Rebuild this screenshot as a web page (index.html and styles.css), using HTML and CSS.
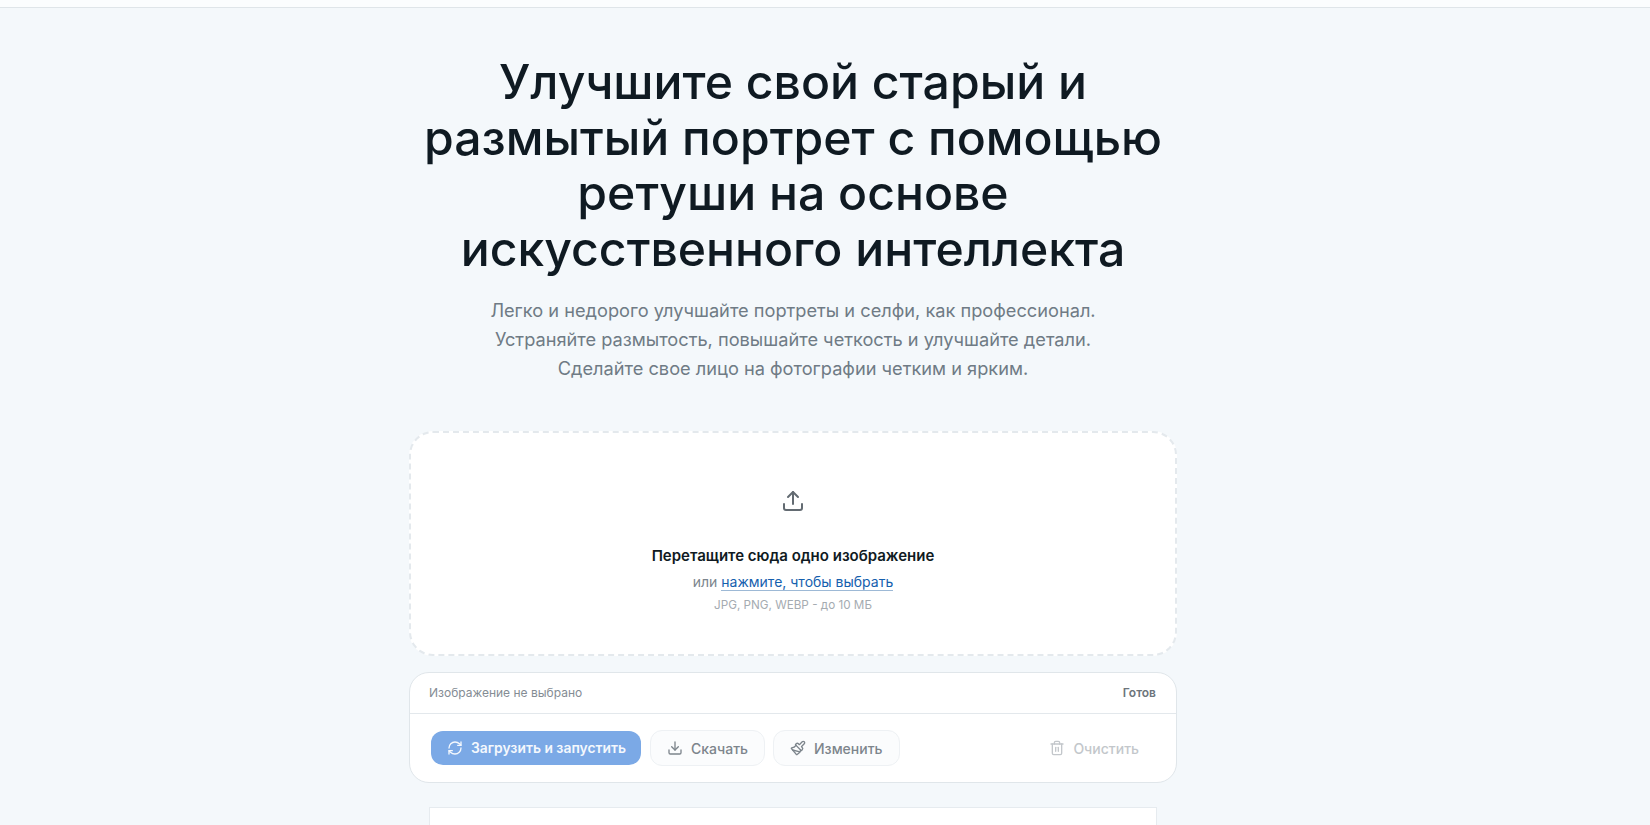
FILE: index.html
```html
<!DOCTYPE html>
<html lang="ru">
<head>
<meta charset="utf-8">
<title>Ретушь портрета</title>
<link rel="stylesheet" href="styles.css">
</head>
<body>
<div class="topbar"></div>
<main class="page">
  <h1 class="title">Улучшите свой старый и размытый портрет с помощью ретуши на основе искусственного интеллекта</h1>
  <p class="lead">Легко и недорого улучшайте портреты и селфи, как профессионал.<br>Устраняйте размытость, повышайте четкость и улучшайте детали.<br>Сделайте свое лицо на фотографии четким и ярким.</p>
  <section class="drop">
    <svg class="drop-icon" viewBox="0 0 24 24" fill="none" stroke="currentColor" stroke-width="2" stroke-linecap="round" stroke-linejoin="round"><path d="M12 15V3"/><path d="M7 8l5-5 5 5"/><path d="M3 15v4a2 2 0 0 0 2 2h14a2 2 0 0 0 2-2v-4"/></svg>
    <div class="drop-title">Перетащите сюда одно изображение</div>
    <div class="drop-sub">или <a class="drop-link" href="#">нажмите, чтобы выбрать</a></div>
    <div class="drop-note">JPG, PNG, WEBP - до 10 МБ</div>
  </section>
  <section class="panel">
    <div class="panel-head"><span class="file">Изображение не выбрано</span><span class="status">Готов</span></div>
    <div class="panel-actions">
      <button class="btn primary"><svg viewBox="0 0 24 24" fill="none" stroke="currentColor" stroke-width="2" stroke-linecap="round" stroke-linejoin="round"><path d="M3 12a9 9 0 0 1 9-9 9.75 9.75 0 0 1 6.74 2.74L21 8"/><path d="M21 3v5h-5"/><path d="M21 12a9 9 0 0 1-9 9 9.75 9.75 0 0 1-6.74-2.74L3 16"/><path d="M8 16H3v5"/></svg>Загрузить и запустить</button>
      <button class="btn"><svg viewBox="0 0 24 24" fill="none" stroke="currentColor" stroke-width="2" stroke-linecap="round" stroke-linejoin="round"><path d="M12 15V3"/><path d="M7 10l5 5 5-5"/><path d="M3 15v4a2 2 0 0 0 2 2h14a2 2 0 0 0 2-2v-4"/></svg>Скачать</button>
      <button class="btn"><svg viewBox="0 0 24 24" fill="none" stroke="currentColor" stroke-width="2" stroke-linecap="round" stroke-linejoin="round"><path d="m14.622 17.897-10.68-2.913"/><path d="M18.376 2.622a1 1 0 1 1 3.002 3.002L17.36 9.643a.5.5 0 0 0 0 .707l.944.944a2.41 2.41 0 0 1 0 3.408l-.944.944a.5.5 0 0 1-.707 0L8.354 7.348a.5.5 0 0 1 0-.707l.944-.944a2.41 2.41 0 0 1 3.408 0l.944.944a.5.5 0 0 0 .707 0z"/><path d="M9 8c-1.804 2.71-3.97 3.46-6.583 3.948a.507.507 0 0 0-.302.819l7.32 8.883a1 1 0 0 0 1.185.204C12.735 20.405 16 16.792 16 15"/></svg>Изменить</button>
      <button class="btn ghost"><svg viewBox="0 0 24 24" fill="none" stroke="currentColor" stroke-width="2" stroke-linecap="round" stroke-linejoin="round"><path d="M3 6h18"/><path d="M19 6v14a2 2 0 0 1-2 2H7a2 2 0 0 1-2-2V6"/><path d="M8 6V4a2 2 0 0 1 2-2h4a2 2 0 0 1 2 2v2"/><path d="M10 11v6"/><path d="M14 11v6"/></svg>Очистить</button>
    </div>
  </section>
  <section class="result"></section>
</main>
</body>
</html>
```
FILE: styles.css
```css
* { box-sizing: border-box; }
html, body { margin: 0; height: 100%; overflow: hidden; }
body { background: #f4f8fb; font-family: Inter, "Liberation Sans", sans-serif; color: #0f1a22; }
.topbar { height: 8px; background: #fbfdfe; border-bottom: 1px solid #dfe5e9; }
.page { width: 768px; margin-left: 409px; display: flex; flex-direction: column; align-items: center; }
.title { margin: 46px -10px 0; font-size: 48.15px; line-height: 55.6px; font-weight: 500; text-align: center; color: #0f1a22; letter-spacing: 0; }
.lead { margin: 20px 0 0; font-size: 18.22px; line-height: 29px; text-align: center; color: #6f7b85; }
.drop { width: 100%; height: 225px; margin-top: 48px; background: #fff; border: 2px dashed #e4e9ed; border-radius: 24px; display: flex; flex-direction: column; align-items: center; color: #0f1a22; }
.drop-icon { width: 24px; height: 24px; margin-top: 56px; color: #636b72; }
.drop-title { margin-top: 33px; font-size: 15px; line-height: 20px; font-weight: 600; white-space: nowrap; }
.drop-sub { margin-top: 6px; font-size: 14px; line-height: 20px; color: #7c858d; }
.drop-link { color: #1560ae; text-decoration: none; border-bottom: 1px solid #9db9d6; }
.drop-note { margin-top: 3px; font-size: 11.7px; line-height: 20px; color: #a5abb1; }
.panel { width: 100%; height: 111px; margin-top: 16px; background: #fff; border: 1px solid #e0e6ea; border-radius: 20px; }
.panel-head { height: 41px; padding: 0 20px 1px 19px; display: flex; align-items: center; justify-content: space-between; border-bottom: 1px solid #e3e8ec; font-size: 12px; color: #848c94; }
.status { font-weight: 600; color: #6c747b; }
.panel-actions { padding: 16px 21px 0 21px; display: flex; align-items: center; gap: 8px; }
.btn { height: 36px; padding: 0 16px; display: inline-flex; align-items: center; gap: 8px; background: #fbfcfd; border: 1px solid #eef1f4; border-radius: 12px; font: 500 14px Inter, "Liberation Sans", sans-serif; color: #7d858c; white-space: nowrap; }
.btn svg { width: 16px; height: 16px; flex: none; }
.btn.primary { height: 34px; width: 210px; margin-right: 1px; padding: 0 16px; background: #7ba9e6; border: 0; color: #f4f8fd; font-size: 13.85px; font-weight: 600; }
.btn.ghost { margin-left: auto; background: none; border: 0; color: #c3c7cb; }
.result { width: 728px; height: 18px; margin-top: 24px; background: #fff; border: 1px solid #e6ebef; border-bottom: 0; }
```
